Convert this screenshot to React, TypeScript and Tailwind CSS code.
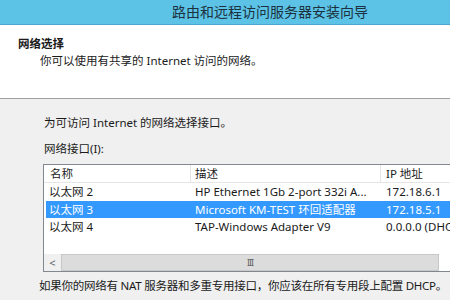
import React from "react";

const font = { fontFamily: '"Noto Sans", "Noto Sans CJK SC", sans-serif' };

export default function App() {
  return (
    <div
      className="w-[450px] h-[300px] overflow-hidden bg-[#f0f0f0] text-[#1a1a1a] text-[11.5px] leading-none"
      style={font}
    >
      <div className="h-[25px] bg-[#5cc3e6] border-b border-[#4aa9cc] flex items-center pl-[172px]">
        <span className="text-[14px] text-[#1b3140]">路由和远程访问服务器安装向导</span>
      </div>
      <div className="h-[74px] bg-white border-b border-[#a0a0a0] pl-[18px] pt-[11px]">
        <div className="font-bold h-[16px] flex items-center">网络选择</div>
        <div className="pl-[22px] h-[17px] flex items-center">你可以使用有共享的 Internet 访问的网络。</div>
      </div>
      <div className="pl-[44px] pt-[16px]">
        <div className="h-[16px] flex items-center">为可访问 Internet 的网络选择接口。</div>
        <div className="h-[16px] flex items-center mt-[10px]">网络接口(I):</div>
      </div>
      <div className="ml-[43px] mt-[7px] w-[430px] h-[108px] border border-[#828790] bg-white flex flex-col">
        <div className="h-[18px] flex border-b border-[#e5e5e5] bg-white">
          <div className="w-[147px] border-r border-[#e5e5e5] pl-[6px] flex items-center">名称</div>
          <div className="w-[190px] border-r border-[#e5e5e5] pl-[4px] flex items-center">描述</div>
          <div className="flex-1 pl-[5px] flex items-center">IP 地址</div>
        </div>
        <div className="h-[18px] flex items-center px-[2px]">
          <div className="w-[145px] pl-[3px]">以太网 2</div>
          <div className="w-[190px] pl-[4px] whitespace-nowrap">HP Ethernet 1Gb 2-port 332i A...</div>
          <div className="pl-[5px] whitespace-nowrap">172.18.6.1</div>
        </div>
        <div className="h-[17px] flex items-center mx-[2px] bg-[#3399ff] text-white">
          <div className="w-[145px] pl-[3px]">以太网 3</div>
          <div className="w-[190px] pl-[4px] whitespace-nowrap">Microsoft KM-TEST 环回适配器</div>
          <div className="pl-[5px] whitespace-nowrap">172.18.5.1</div>
        </div>
        <div className="h-[18px] flex items-center px-[2px]">
          <div className="w-[145px] pl-[3px]">以太网 4</div>
          <div className="w-[190px] pl-[4px] whitespace-nowrap">TAP-Windows Adapter V9</div>
          <div className="pl-[5px] whitespace-nowrap">0.0.0.0 (DHCP)</div>
        </div>
        <div className="flex-1" />
        <div className="h-[17px] flex bg-[#e8e8e8]">
          <div className="w-[17px] flex items-center justify-center bg-[#f0f0f0] text-[#606060] text-[11px]">&lt;</div>
          <div className="w-[378px] border border-[#c8c8c8] bg-[#dcdcdc] flex items-center justify-center text-[#606060] text-[9px] tracking-[-1px]">III</div>
          <div className="flex-1 bg-white" />
        </div>
      </div>
      <div className="pl-[39px] mt-[6px] h-[16px] flex items-center whitespace-nowrap tracking-[-0.25px]">
        如果你的网络有 NAT 服务器和多重专用接口，你应该在所有专用段上配置 DHCP。
      </div>
    </div>
  );
}
